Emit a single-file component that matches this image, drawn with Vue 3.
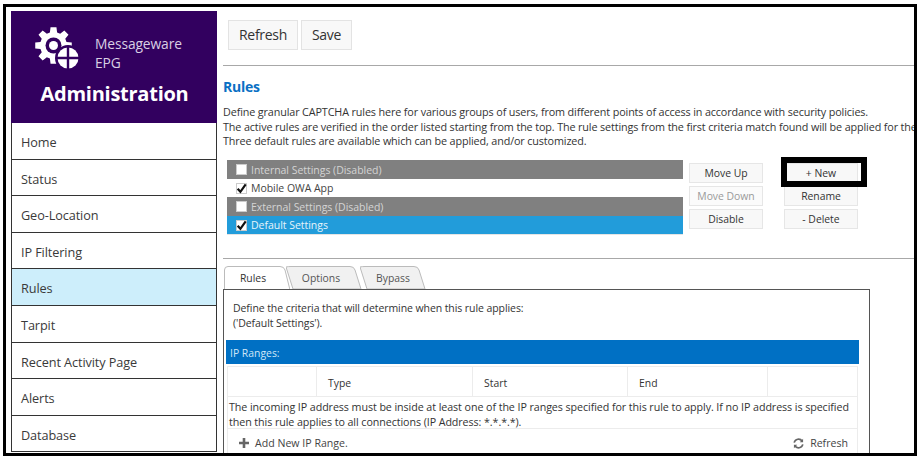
<script setup>
const nav = ['Home', 'Status', 'Geo-Location', 'IP Filtering', 'Rules', 'Tarpit', 'Recent Activity Page', 'Alerts', 'Database']
const rules = [
  { label: 'Internal Settings (Disabled)', checked: false, kind: 'off' },
  { label: 'Mobile OWA App', checked: true, kind: 'on' },
  { label: 'External Settings (Disabled)', checked: false, kind: 'off' },
  { label: 'Default Settings', checked: true, kind: 'sel' },
]
const teeth = 8
const c = 18.5
let gear = ''
for (let i = 0; i < teeth; i++) {
  const a = (i / teeth) * Math.PI * 2
  const w = 0.2
  const pts = [[13.5, a - w * 1.35], [18.5, a - w * 0.8], [18.5, a + w * 0.8], [13.5, a + w * 1.35]]
  pts.forEach(([r, t], j) => {
    gear += (i === 0 && j === 0 ? 'M' : 'L') + (c + r * Math.cos(t)).toFixed(2) + ' ' + (c + r * Math.sin(t)).toFixed(2)
  })
}
gear += 'Z'
</script>

<template>
  <div class="frame">
    <aside class="side">
      <div class="brand">
        <div class="brand-top">
          <svg class="logo" width="52" height="50" viewBox="0 0 52 50">
            <path :d="gear" fill="#fff" />
            <circle cx="18.5" cy="18.5" r="8" fill="#32005f" />
            <circle cx="18.5" cy="18.5" r="4.5" fill="#fff" />
            <circle cx="33" cy="31" r="13" fill="#32005f" />
            <circle cx="33" cy="31" r="10.5" fill="#fff" />
            <path d="M33 20v22M22 31h22" stroke="#32005f" stroke-width="2.4" />
          </svg>
          <div class="brand-name">Messageware<br />EPG</div>
        </div>
        <div class="brand-title">Administration</div>
      </div>
      <nav class="nav">
        <div v-for="n in nav" :key="n" class="nav-item" :class="{ active: n === 'Rules' }">{{ n }}</div>
      </nav>
    </aside>

    <main class="main">
      <div class="toolbar">
        <button class="tbtn">Refresh</button>
        <button class="tbtn">Save</button>
      </div>
      <div class="rule-line first"></div>
      <h1 class="title">Rules</h1>
      <div class="desc">
        <div>Define granular CAPTCHA rules here for various groups of users, from different points of access in accordance with security policies.</div>
        <div>The active rules are verified in the order listed starting from the top. The rule settings from the first criteria match found will be applied for the</div>
        <div>Three default rules are available which can be applied, and/or customized.</div>
      </div>

      <div class="rules-row">
        <div class="rule-list">
          <div v-for="r in rules" :key="r.label" class="rule" :class="r.kind">
            <span class="check">
              <svg v-if="r.checked" width="11" height="11" viewBox="0 0 10 10"><path d="M1.5 5.2 4 8 8.8 1.2" fill="none" stroke="#111" stroke-width="2" /></svg>
            </span>
            {{ r.label }}
          </div>
        </div>
        <div class="btn-col one">
          <button class="sbtn">Move Up</button>
          <button class="sbtn muted">Move Down</button>
          <button class="sbtn">Disable</button>
        </div>
        <div class="btn-col two">
          <button class="sbtn">+ New</button>
          <button class="sbtn">Rename</button>
          <button class="sbtn">- Delete</button>
          <div class="highlight"></div>
        </div>
      </div>

      <div class="rule-line second"></div>

      <div class="tabs">
        <div class="tab current">
          <svg width="66" height="24" viewBox="0 0 66 24"><path d="M.5 24V4Q.5 .5 4 .5H56Q60 .5 61 4L66 24" fill="#fff" stroke="#bbb" /></svg>
          <span>Rules</span>
        </div>
        <div class="tab">
          <svg width="76" height="23" viewBox="0 0 76 23"><path d="M0 1Q2 .5 5 .5H64Q68 .5 69 4L75 23H7Z" fill="#f1f1f1" stroke="#bbb" /></svg>
          <span>Options</span>
        </div>
        <div class="tab">
          <svg width="66" height="23" viewBox="0 0 66 23"><path d="M0 1Q2 .5 5 .5H54Q58 .5 59 4L65 23H7Z" fill="#f1f1f1" stroke="#bbb" /></svg>
          <span>Bypass</span>
        </div>
      </div>

      <section class="panel">
        <div class="panel-intro">
          <div>Define the criteria that will determine when this rule applies:</div>
          <div>('Default Settings').</div>
        </div>
        <div class="bar">IP Ranges:</div>
        <div class="table">
          <div class="thead">
            <div class="cell c1"></div>
            <div class="cell c2">Type</div>
            <div class="cell c3">Start</div>
            <div class="cell c4">End</div>
            <div class="cell c5"></div>
          </div>
          <div class="note">The incoming IP address must be inside at least one of the IP ranges specified for this rule to apply. If no IP address is specified then this rule applies to all connections (IP Address: *.*.*.*).</div>
          <div class="tfoot">
            <span class="add">
              <svg width="10" height="10" viewBox="0 0 10 10"><path d="M5 0v10M0 5h10" stroke="#666" stroke-width="2.6" /></svg>
              Add New IP Range.
            </span>
            <span class="refresh">
              <svg width="11" height="11" viewBox="0 0 12 12" fill="none" stroke="#666" stroke-width="1.8">
                <path d="M1.3 5A4.8 4.8 0 0 1 10 3.5" />
                <path d="M10.7 7A4.8 4.8 0 0 1 2 8.5" />
                <path d="M11 .8V4.6H7.4Z M1 11.2V7.4H4.6Z" fill="#666" stroke="none" />
              </svg>
              Refresh
            </span>
          </div>
        </div>
      </section>
    </main>
  </div>
</template>

<style>
html, body { margin: 0; background: #fff; }
</style>

<style scoped>
.frame {
  box-sizing: border-box;
  width: 914px;
  height: 452px;
  margin: 4px 0 0 3px;
  border: 3px solid #000;
  display: flex;
  overflow: hidden;
  background: #fff;
  font-family: "Open Sans", "Noto Sans", sans-serif;
  color: #333;
}
.side { width: 206px; margin: 4px 0 0 5px; flex: none; }
.brand { height: 112px; box-sizing: border-box; background: #32005f; color: #fff; padding-top: 16px; }
.brand-top { display: flex; align-items: flex-start; padding-left: 24px; height: 50px; }
.logo { flex: none; }
.brand-name { margin: 7px 0 0 8px; font-size: 13.8px; line-height: 19px; color: #d9cfe3; letter-spacing: -.1px; }
.brand-title { margin-top: 3px; text-align: center; font-size: 20px; line-height: 28px; font-weight: 700; letter-spacing: -.25px; padding-left: 1px; font-family: "Open Sans", sans-serif; }
.nav { border-left: 1px solid #333; border-right: 1px solid #333; }
.nav-item {
  box-sizing: border-box;
  height: 36.6px;
  line-height: 38px;
  padding-left: 9px;
  font-size: 12.7px;
  letter-spacing: -.1px;
  border-bottom: 1px solid #333;
  color: #3a3a3a;
}
.nav-item.active { background: #cdeefb; }

.main { flex: 1; min-width: 0; margin-left: 6px; }
.toolbar { display: flex; gap: 3px; margin: 13px 0 0 5px; }
.tbtn {
  height: 30px;
  padding: 0 10px 2px;
  border: 1px solid #e3e3e3;
  background: #f8f8f8;
  font: 14px "Open Sans", sans-serif;
  letter-spacing: -.3px;
  color: #333;
}
.rule-line { height: 1px; background: #a8a8a8; }
.rule-line.first { margin-top: 15px; }
.title { margin: 12px 0 0; font-size: 14px; line-height: 18px; font-weight: 700; letter-spacing: -.25px; color: #0a70c4; }
.desc { margin-top: 9px; font-size: 10.8px; line-height: 14.7px; white-space: nowrap; letter-spacing: -.13px; color: #333; }
.rules-row { display: flex; align-items: flex-start; margin-top: 11px; }
.rule-list { width: 456px; margin-left: 4px; flex: none; border-bottom: 1px solid #e4e4e4; box-sizing: border-box; height: 75px; }
.rule {
  height: 18.5px;
  box-sizing: border-box;
  padding: 1px 0 0 9px;
  display: flex;
  align-items: center;
  font-size: 10.5px;
  letter-spacing: -.03px;
}
.rule.off { background: #808080; color: #d4d4d4; }
.rule.on { background: #fff; color: #444; }
.rule.sel { background: #229cda; color: #e6f4fb; }
.check {
  box-sizing: border-box;
  width: 11px;
  height: 11px;
  margin-right: 4px;
  background: #fff;
  border: 1px solid #ccc;
  display: flex;
  align-items: center;
  justify-content: center;
  overflow: visible;
}
.check svg { flex: none; }
.btn-col { display: flex; flex-direction: column; gap: 3.5px; flex: none; width: 74px; padding-top: 3px; position: relative; }
.btn-col.one { margin-left: 6px; }
.btn-col.two { margin-left: 21px; }
.sbtn {
  height: 19.5px;
  padding: 0;
  border: 1px solid #e6e6e6;
  background: #f8f8f8;
  font: 10.4px "Open Sans", sans-serif;
  letter-spacing: -.02px;
  color: #333;
}
.sbtn.muted { color: #9a9a9a; background: #fbfbfb; }
.highlight {
  position: absolute;
  left: -3px;
  top: -3px;
  width: 86px;
  height: 30px;
  box-sizing: border-box;
  border: 6px solid #000;
}
.rule-line.second { margin-top: 23px; }
.tabs { display: flex; margin: 7px 0 0 1px; height: 23px; align-items: flex-end; }
.tab { position: relative; height: 23px; font-size: 10.4px; color: #555; }
.tab svg { position: absolute; left: 0; top: 0; display: block; }
.tab span { position: relative; display: block; text-align: center; line-height: 25px; }
.tab.current { width: 62px; color: #333; z-index: 2; }
.tab.current span { width: 58px; }
.tab:nth-child(2) { width: 74px; z-index: 1; }
.tab:nth-child(2) span { width: 70px; }
.tab:nth-child(3) { width: 66px; }
.tab:nth-child(3) span { width: 58px; padding-left: 4px; }

.panel {
  width: 647px;
  box-sizing: border-box;
  margin-left: 0;
  height: 170px;
  border-top: 1px solid #555;
  border-left: 1px solid #555;
  border-right: 1px solid #555;
  padding-left: 2px;
  background: #fff;
  position: relative;
  z-index: 3;
}
.panel-intro { padding: 11px 0 0 7px; font-size: 10.5px; line-height: 14.5px; letter-spacing: -.08px; height: 39px; }
.bar { width: 633px; margin-top: 0; height: 24px; line-height: 27px; background: #0070c4; color: #cfe6f7; font-size: 10.4px; padding-left: 4px; box-sizing: border-box; }
.table { width: 631px; margin: 2px 0 0 1px; border: 1px solid #ececec; border-bottom: 0; box-sizing: border-box; }
.thead { display: flex; height: 30px; border-bottom: 1px solid #ececec; box-sizing: border-box; }
.cell { box-sizing: border-box; line-height: 32px; font-size: 10.4px; padding-left: 11px; border-right: 1px solid #ececec; }
.c1 { width: 89px; }
.c2 { width: 156px; }
.c3 { width: 155px; }
.c4 { width: 140px; }
.c5 { flex: 1; border-right: 0; }
.note { padding: 3px 2px 2px 1px; font-size: 10.7px; line-height: 15px; letter-spacing: -.07px; border-bottom: 1px solid #ececec; height: 32px; box-sizing: border-box; }
.tfoot { display: flex; justify-content: space-between; font-size: 10.6px; line-height: 28px; padding: 0 9px 0 11px; color: #444; }
.add, .refresh { display: inline-flex; align-items: center; gap: 6px; }
</style>
